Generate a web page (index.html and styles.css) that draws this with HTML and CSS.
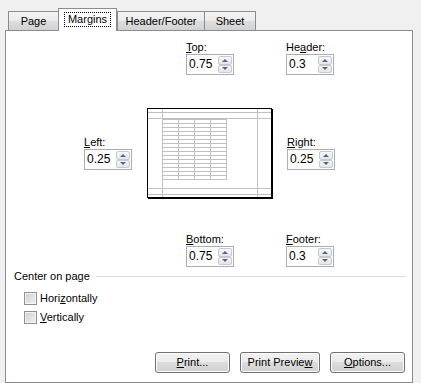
FILE: index.html
```html
<!DOCTYPE html>
<html>
<head>
<meta charset="utf-8">
<link rel="stylesheet" href="styles.css">
</head>
<body>
<div class="dialog">
  <div class="tabs">
    <div class="tab t-page">Page</div>
    <div class="tab sel t-margins"><span class="focus">Margins</span></div>
    <div class="tab t-hf">Header/Footer</div>
    <div class="tab t-sheet">Sheet</div>
  </div>
  <div class="panel">
    <div class="mgrid">
      <div class="field f-top">
        <div class="lbl"><u>T</u>op:</div>
        <div class="spin"><span class="val">0.75</span><span class="sbtns"><span class="sb"><i class="up"></i></span><span class="sb"><i class="dn"></i></span></span></div>
      </div>
      <div class="field f-header">
        <div class="lbl">He<u>a</u>der:</div>
        <div class="spin"><span class="val">0.3</span><span class="sbtns"><span class="sb"><i class="up"></i></span><span class="sb"><i class="dn"></i></span></span></div>
      </div>
      <div class="field f-left">
        <div class="lbl"><u>L</u>eft:</div>
        <div class="spin"><span class="val">0.25</span><span class="sbtns"><span class="sb"><i class="up"></i></span><span class="sb"><i class="dn"></i></span></span></div>
      </div>
      <svg class="preview" width="127" height="92" viewBox="0 0 127 92">
        <g stroke="#c0c0c0" fill="none" shape-rendering="crispEdges">
          <path d="M1 4.5H124M1 10.5H124M1 80.5H124M1 86.5H124M15.5 1V89M110.5 1V89"/>
          <path d="M31.5 11V72M47.5 11V72M63.5 11V72M79.5 11V72"/>
          <path d="M15 11.5H80M15 15.5H80M15 19.5H80M15 23.5H80M15 27.5H80M15 31.5H80M15 35.5H80M15 39.5H80M15 43.5H80M15 47.5H80M15 51.5H80M15 55.5H80M15 59.5H80M15 63.5H80M15 67.5H80M15 71.5H80"/>
        </g>
        <rect x="0.5" y="0.5" width="124" height="89" fill="none" stroke="#000" shape-rendering="crispEdges"/>
        <path d="M125.5 1V91M1 90.5H126" stroke="#000" shape-rendering="crispEdges"/>
      </svg>
      <div class="field f-right">
        <div class="lbl"><u>R</u>ight:</div>
        <div class="spin"><span class="val">0.25</span><span class="sbtns"><span class="sb"><i class="up"></i></span><span class="sb"><i class="dn"></i></span></span></div>
      </div>
      <div class="field f-bottom">
        <div class="lbl"><u>B</u>ottom:</div>
        <div class="spin"><span class="val">0.75</span><span class="sbtns"><span class="sb"><i class="up"></i></span><span class="sb"><i class="dn"></i></span></span></div>
      </div>
      <div class="field f-footer">
        <div class="lbl"><u>F</u>ooter:</div>
        <div class="spin"><span class="val">0.3</span><span class="sbtns"><span class="sb"><i class="up"></i></span><span class="sb"><i class="dn"></i></span></span></div>
      </div>
    </div>
    <div class="ghead"><span>Center on page</span><span class="rule"></span></div>
    <div class="check first"><span class="cbox"></span><span>Hori<u>z</u>ontally</span></div>
    <div class="check"><span class="cbox"></span><span><u>V</u>ertically</span></div>
    <div class="buttons">
      <button class="btn b-print"><u>P</u>rint...</button>
      <button class="btn b-preview">Print Previe<u>w</u></button>
      <button class="btn b-options"><u>O</u>ptions...</button>
    </div>
  </div>
</div>
</body>
</html>
```
FILE: styles.css
```css
html, body {
  margin: 0;
  background: #f0f0f0;
  font: 11px/13px "Liberation Sans", Arial, sans-serif;
  color: #000;
}
.dialog {
  width: 421px;
  height: 383px;
  overflow: hidden;
}
.tabs {
  display: flex;
  align-items: flex-end;
  height: 30px;
  padding-left: 8px;
  box-sizing: border-box;
}
.tab {
  box-sizing: border-box;
  height: 19px;
  border: 1px solid #898c95;
  border-bottom: 0;
  background: linear-gradient(#f3f3f3, #ebebeb 50%, #dedede 50%, #d2d2d2);
  text-align: center;
  padding-top: 3px;
}
.t-page { width: 51px; }
.t-margins { width: 59px; margin-left: -1px; }
.t-hf { width: 88px; }
.t-sheet { width: 52px; margin-left: -1px; }
.tab.sel {
  height: 23px;
  margin-bottom: -1px;
  position: relative;
  z-index: 1;
  background: #fff;
  padding-top: 3px;
}
.focus {
  display: inline-block;
  border: 1px dotted #000;
  padding: 0 3px;
}
.panel {
  margin-left: 5px;
  width: 408px;
  height: 353px;
  box-sizing: border-box;
  border: 1px solid #898c95;
  background: #fff;
}
.mgrid {
  display: grid;
  grid-template-columns: 62px 128px 1fr;
  grid-template-rows: 34px 158px 34px;
  padding: 10px 0 0 78px;
}
.field {
  display: flex;
  flex-direction: column;
  align-items: flex-start;
}
.lbl { height: 13px; }
.f-top { grid-column: 2; grid-row: 1; margin-left: 40px; }
.f-header { grid-column: 3; grid-row: 1; margin-left: 12px; }
.f-left { grid-column: 1; grid-row: 2; margin-top: 61px; }
.preview { grid-column: 2; grid-row: 2; margin: 33px 0 0 1px; display: block; }
.f-right { grid-column: 3; grid-row: 2; margin: 61px 0 0 13px; }
.f-bottom { grid-column: 2; grid-row: 3; margin-left: 40px; }
.f-footer { grid-column: 3; grid-row: 3; margin-left: 12px; }
.spin {
  display: flex;
  box-sizing: border-box;
  width: 48px;
  height: 21px;
  border: 1px solid #abadb3;
  background: #fff;
}
.val {
  flex: 1;
  padding-left: 2px;
  font-size: 12px;
  line-height: 19px;
}
.sbtns {
  display: flex;
  flex-direction: column;
  width: 14px;
  margin: 1px 1px 1px 0;
}
.sb {
  flex: 1;
  box-sizing: border-box;
  border: 1px solid #c6c9cf;
  border-radius: 2px;
  background: linear-gradient(#f7f7f7, #e6e6e6);
  display: flex;
  align-items: center;
  justify-content: center;
}
.up, .dn {
  display: block;
  width: 0;
  height: 0;
  border-left: 3px solid transparent;
  border-right: 3px solid transparent;
}
.up { border-bottom: 3px solid #4e6491; }
.dn { border-top: 3px solid #4e6491; }
.ghead {
  display: flex;
  align-items: center;
  margin: 3px 6px 0 8px;
}
.rule {
  flex: 1;
  height: 1px;
  background: #d5dfe5;
  margin-left: 6px;
}
.check {
  display: flex;
  align-items: center;
  height: 19px;
  padding-left: 18px;
}
.check.first { margin-top: 6px; }
.cbox {
  box-sizing: border-box;
  width: 13px;
  height: 13px;
  margin-right: 3px;
  border: 1px solid #8e8f8f;
  padding: 1px;
  background: #f4f4f4;
}
.cbox::after {
  content: "";
  display: block;
  width: 9px;
  height: 9px;
  background: linear-gradient(135deg, #cfd1d4, #eeeeee);
}
.buttons {
  display: flex;
  justify-content: flex-end;
  gap: 10px;
  padding-right: 7px;
  margin-top: 25px;
}
.btn {
  box-sizing: border-box;
  height: 21px;
  border: 1px solid #707070;
  border-radius: 3px;
  background: linear-gradient(#f2f2f2, #ebebeb 50%, #dddddd 50%, #cfcfcf);
  box-shadow: inset 0 0 0 1px #fcfcfc;
  font: inherit;
  color: #000;
  line-height: 19px;
  padding: 0;
  text-align: center;
}
.b-print { width: 75px; }
.b-preview { width: 80px; }
.b-options { width: 75px; }
```
